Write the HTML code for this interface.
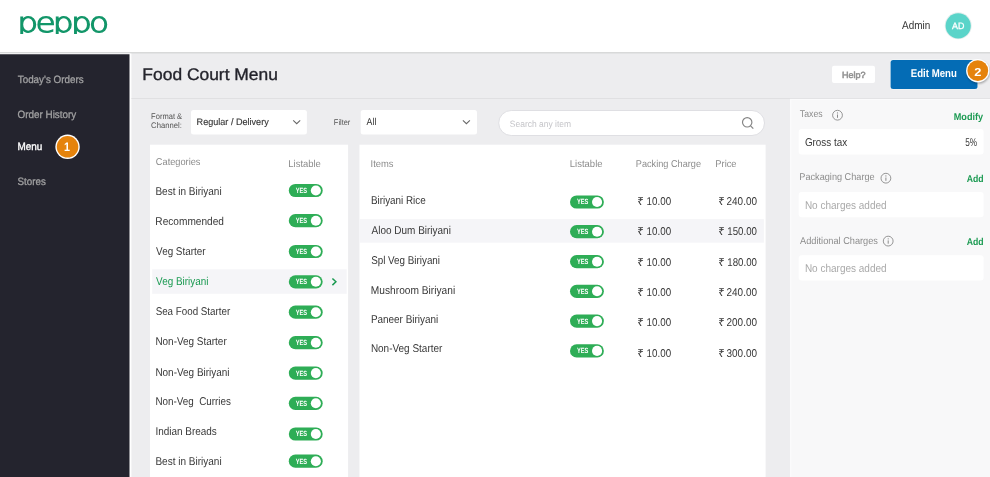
<!DOCTYPE html>
<html>
<head>
<meta charset="utf-8">
<title>Food Court Menu</title>
<style>
*{box-sizing:border-box;margin:0;padding:0}
html,body{width:990px;height:477px;overflow:hidden;background:#ededef;font-family:"Liberation Sans",sans-serif}
#bg{position:absolute;left:0;top:0;width:990px;height:477px}
#tx{position:absolute;left:0;top:0;width:990px;height:477px;will-change:transform}
.t{position:absolute;white-space:nowrap;transform-origin:0 0;text-rendering:geometricPrecision}
#logo{position:absolute;left:0;top:0;width:130px;height:34px;overflow:hidden}
.lg{position:absolute;left:0;top:4px;font-family:"DejaVu Sans","Liberation Sans",sans-serif;font-weight:200;font-size:27.37px;line-height:40px;color:#129669;-webkit-text-stroke:1.2px #129669;letter-spacing:-2.33px;white-space:nowrap;text-rendering:geometricPrecision;transform-origin:0 0;transform:translateX(17.36px) scaleX(1.202)}
</style>
</head>
<body>
<svg id="bg" width="990" height="477" viewBox="0 0 990 477">
<defs>
<filter id="bs" x="-30%" y="-30%" width="160%" height="160%"><feGaussianBlur stdDeviation="1.3"/></filter>
<g id="tg"><rect x="0" y="-6.6" width="33.9" height="13.2" rx="6.6" fill="#2ead56"/><circle cx="27.05" cy="0" r="5.05" fill="#fff"/></g>
<g id="info" fill="none" stroke="#8a8a8a"><circle cx="0" cy="0" r="4.9" stroke-width="0.9"/><path d="M0 -0.7V2.6" stroke-width="1"/><circle cx="0" cy="-2.3" r="0.6" fill="#8a8a8a" stroke="none"/></g>
<path id="chev" d="M-3.5 -1.7L0 1.6L3.5 -1.7" fill="none" stroke="#666" stroke-width="1.05"/>
</defs>
<!-- header -->
<rect x="0" y="0" width="990" height="52" fill="#fff"/>
<rect x="0" y="52" width="990" height="1.5" fill="#d8d9d9"/>
<!-- sidebar -->
<rect x="0" y="53.5" width="131.4" height="424" fill="#fff"/>
<rect x="0" y="54.25" width="129.5" height="423" fill="#24242e"/>
<circle cx="67.55" cy="146.8" r="12.2" fill="#fff"/><circle cx="67.55" cy="146.8" r="10.8" fill="#e5830c"/>
<!-- avatar -->
<circle cx="958.2" cy="25.8" r="13.5" fill="#e3eeed"/><circle cx="958.2" cy="25.8" r="12.6" fill="#5ad4c9"/>
<!-- title bar -->
<rect x="131.4" y="98" width="858.6" height="1" fill="#e0e0e2"/>
<rect x="832" y="65.8" width="43" height="17.2" rx="2" fill="#fff"/>
<rect x="890.1" y="59.4" width="87.9" height="30" rx="3" fill="#f6fafa"/>
<rect x="890.6" y="59.9" width="86.9" height="29" rx="2.5" fill="#046cb5"/>
<circle cx="978.3" cy="72.2" r="11.4" fill="#000" opacity="0.33" filter="url(#bs)"/><circle cx="977.8" cy="70.7" r="11.7" fill="#fff"/><circle cx="977.8" cy="70.7" r="10.4" fill="#e5830c"/>
<!-- right panel -->
<rect x="790" y="98.9" width="200" height="379" fill="#fbfbfc"/>
<rect x="791.2" y="100" width="199" height="378" fill="#f8f8f9"/>
<rect x="798.7" y="128.9" width="184.9" height="25.5" rx="3" fill="#fff"/>
<rect x="798.7" y="192.1" width="184.9" height="25.2" rx="3" fill="#fff"/>
<rect x="798.7" y="255.3" width="184.9" height="25.2" rx="3" fill="#fff"/>
<use href="#info" x="837.5" y="115.2"/>
<use href="#info" x="885.9" y="178.2"/>
<use href="#info" x="888.2" y="241.1"/>
<!-- filter row -->
<rect x="191" y="110.1" width="115.9" height="24.3" rx="2.5" fill="#fff"/>
<rect x="360.7" y="110.1" width="116.3" height="24.3" rx="2.5" fill="#fff"/>
<use href="#chev" x="296.7" y="122.1"/>
<use href="#chev" x="466.4" y="122.1"/>
<rect x="498.7" y="110.5" width="265.8" height="25" rx="12.5" fill="#fff" stroke="#dfdfe3" stroke-width="1"/>
<circle cx="747.2" cy="122.3" r="4.7" fill="none" stroke="#848484" stroke-width="1.15"/><path d="M750.6 125.8L753.3 128.6" stroke="#848484" stroke-width="1.2"/>
<!-- panels -->
<rect x="150" y="144.7" width="198.1" height="333" fill="#fff"/>
<rect x="152.2" y="269.3" width="194.5" height="24.5" fill="#f5f5f8"/>
<path d="M332.4 278.5L335.9 281.8L332.4 285.1" fill="none" stroke="#1b9a52" stroke-width="1.5"/>
<rect x="359.45" y="144.7" width="406.15" height="333" fill="#fff"/>
<rect x="359.3" y="219.1" width="404.6" height="23.6" fill="#f5f5f8"/>
<use href="#tg" x="288.8" y="190.5"/>
<use href="#tg" x="288.8" y="220.7"/>
<use href="#tg" x="288.8" y="251.5"/>
<use href="#tg" x="288.8" y="281.8"/>
<use href="#tg" x="288.8" y="312.2"/>
<use href="#tg" x="288.8" y="342.7"/>
<use href="#tg" x="288.8" y="373.1"/>
<use href="#tg" x="288.8" y="403.3"/>
<use href="#tg" x="288.8" y="434.0"/>
<use href="#tg" x="288.8" y="461.2"/>
<use href="#tg" x="570.0" y="202.0"/>
<use href="#tg" x="570.0" y="231.7"/>
<use href="#tg" x="570.0" y="261.7"/>
<use href="#tg" x="570.0" y="291.3"/>
<use href="#tg" x="570.0" y="321.1"/>
<use href="#tg" x="570.0" y="350.9"/>
</svg>
<div id="tx">
<div id="logo"><div class="lg">peppo</div></div>
<div class="t" style="left:902px;top:18px;font-size:11.3px;line-height:16px;color:#333;transform:translateX(0.10px) scaleX(0.8801)">Admin</div>
<div class="t" style="left:951px;top:19px;font-size:9.2px;line-height:14px;color:#fff;transform:translateX(1.00px) scaleX(0.9662);-webkit-text-stroke:0.3px #fff">AD</div>
<div class="t" style="left:17px;top:72px;font-size:10.61px;line-height:16px;color:#a1a1a2;transform:translateX(0.75px) scaleX(0.9277);-webkit-text-stroke:0.3px #a1a1a2">Today's Orders</div>
<div class="t" style="left:17px;top:107px;font-size:10.61px;line-height:16px;color:#a1a1a2;transform:translateX(0.50px) scaleX(0.9318);-webkit-text-stroke:0.3px #a1a1a2">Order History</div>
<div class="t" style="left:17px;top:139px;font-size:10.61px;line-height:16px;color:#fff;transform:translateX(0.50px) scaleX(0.9349);-webkit-text-stroke:0.35px #fff">Menu</div>
<div class="t" style="left:17px;top:174px;font-size:10.61px;line-height:16px;color:#a1a1a2;transform:translateX(0.50px) scaleX(0.9220);-webkit-text-stroke:0.3px #a1a1a2">Stores</div>
<div class="t" style="left:64px;top:139px;font-size:12.26px;line-height:17px;color:#fff;transform:translateX(0.02px) scaleX(0.8784);font-weight:700">1</div>
<div class="t" style="left:142px;top:63px;font-size:16.74px;line-height:23px;color:#24242c;transform:translateX(0.36px) scaleX(1.0409);-webkit-text-stroke:0.35px #24242c">Food Court Menu</div>
<div class="t" style="left:841px;top:68px;font-size:8.9px;line-height:14px;color:#939393;transform:translateX(0.95px) scaleX(1.0169);-webkit-text-stroke:0.55px #939393">Help?</div>
<div class="t" style="left:910px;top:66px;font-size:11.3px;line-height:16px;color:#fff;transform:translateX(0.80px) scaleX(0.8527);font-weight:700">Edit Menu</div>
<div class="t" style="left:974px;top:65px;font-size:11.6px;line-height:16px;color:#fff;transform:translateX(0.18px) scaleX(1.1048);font-weight:700">2</div>
<div class="t" style="left:151px;top:111px;font-size:8.21px;line-height:12px;color:#555;transform:translateX(0.10px) scaleX(0.9207)">Format &amp;</div>
<div class="t" style="left:151px;top:120px;font-size:8.21px;line-height:12px;color:#555;transform:translateX(0.10px) scaleX(0.9348)">Channel:</div>
<div class="t" style="left:196px;top:116px;font-size:9.53px;line-height:14px;color:#383838;transform:translateX(0.58px) scaleX(0.9540);-webkit-text-stroke:0.15px #383838">Regular / Delivery</div>
<div class="t" style="left:333px;top:117px;font-size:8.21px;line-height:12px;color:#555;transform:translateX(0.87px) scaleX(0.9007)">Filter</div>
<div class="t" style="left:366px;top:116px;font-size:9.89px;line-height:14px;color:#333;transform:translateX(0.60px) scaleX(0.8904)">All</div>
<div class="t" style="left:509px;top:118px;font-size:9.17px;line-height:13px;color:#c4c4c8;transform:translateX(0.85px) scaleX(0.9244)">Search any item</div>
<div class="t" style="left:155px;top:156px;font-size:9.89px;line-height:14px;color:#8c8c8c;transform:translateX(0.84px) scaleX(0.9347)">Categories</div>
<div class="t" style="left:288px;top:158px;font-size:9.89px;line-height:14px;color:#8c8c8c;transform:translateX(0.32px) scaleX(0.9562)">Listable</div>
<div class="t" style="left:155px;top:184px;font-size:11.3px;line-height:16px;color:#383838;transform:translateX(0.38px) scaleX(0.8867)">Best in Biriyani</div>
<div class="t" style="left:155px;top:214px;font-size:11.3px;line-height:16px;color:#383838;transform:translateX(0.37px) scaleX(0.8948)">Recommended</div>
<div class="t" style="left:156px;top:244px;font-size:11.3px;line-height:16px;color:#383838;transform:translateX(0.10px) scaleX(0.8738)">Veg Starter</div>
<div class="t" style="left:156px;top:274px;font-size:11.3px;line-height:16px;color:#1b9a52;transform:translateX(0.10px) scaleX(0.8777)">Veg Biriyani</div>
<div class="t" style="left:155px;top:304px;font-size:11.3px;line-height:16px;color:#383838;transform:translateX(0.63px) scaleX(0.8670)">Sea Food Starter</div>
<div class="t" style="left:155px;top:334px;font-size:11.3px;line-height:16px;color:#383838;transform:translateX(0.38px) scaleX(0.8807)">Non-Veg Starter</div>
<div class="t" style="left:155px;top:365px;font-size:11.3px;line-height:16px;color:#383838;transform:translateX(0.38px) scaleX(0.8814)">Non-Veg Biriyani</div>
<div class="t" style="left:155px;top:394px;font-size:11.3px;line-height:16px;color:#383838;transform:translateX(0.39px) scaleX(0.8710)">Non-Veg&nbsp; Curries</div>
<div class="t" style="left:155px;top:424px;font-size:11.3px;line-height:16px;color:#383838;transform:translateX(0.39px) scaleX(0.8804)">Indian Breads</div>
<div class="t" style="left:155px;top:454px;font-size:11.3px;line-height:16px;color:#383838;transform:translateX(0.38px) scaleX(0.8867)">Best in Biriyani</div>
<div class="t" style="left:370px;top:158px;font-size:9.89px;line-height:14px;color:#8c8c8c;transform:translateX(0.57px) scaleX(0.9503)">Items</div>
<div class="t" style="left:569px;top:158px;font-size:9.89px;line-height:14px;color:#8c8c8c;transform:translateX(0.82px) scaleX(0.9607)">Listable</div>
<div class="t" style="left:635px;top:158px;font-size:9.89px;line-height:14px;color:#8c8c8c;transform:translateX(0.84px) scaleX(0.9271)">Packing Charge</div>
<div class="t" style="left:715px;top:158px;font-size:9.89px;line-height:14px;color:#8c8c8c;transform:translateX(0.33px) scaleX(0.9432)">Price</div>
<div class="t" style="left:370px;top:193px;font-size:11.3px;line-height:16px;color:#383838;transform:translateX(0.89px) scaleX(0.8737)">Biriyani Rice</div>
<div class="t" style="left:637px;top:195px;font-size:10.9px;line-height:15px;color:#383838;transform:translateX(0.13px) scaleX(1.0722);font-family:"DejaVu Sans",sans-serif">₹</div>
<div class="t" style="left:646px;top:194px;font-size:11.3px;line-height:16px;color:#383838;transform:translateX(0.54px) scaleX(0.8686)">10.00</div>
<div class="t" style="left:718px;top:195px;font-size:10.9px;line-height:15px;color:#383838;transform:translateX(0.14px) scaleX(1.0509);font-family:"DejaVu Sans",sans-serif">₹</div>
<div class="t" style="left:726px;top:194px;font-size:11.3px;line-height:16px;color:#383838;transform:translateX(0.52px) scaleX(0.8814)">240.00</div>
<div class="t" style="left:371px;top:223px;font-size:11.3px;line-height:16px;color:#383838;transform:translateX(0.60px) scaleX(0.8830)">Aloo Dum Biriyani</div>
<div class="t" style="left:637px;top:225px;font-size:10.9px;line-height:15px;color:#383838;transform:translateX(0.13px) scaleX(1.0722);font-family:"DejaVu Sans",sans-serif">₹</div>
<div class="t" style="left:646px;top:224px;font-size:11.3px;line-height:16px;color:#383838;transform:translateX(0.54px) scaleX(0.8686)">10.00</div>
<div class="t" style="left:718px;top:225px;font-size:10.9px;line-height:15px;color:#383838;transform:translateX(0.14px) scaleX(1.0509);font-family:"DejaVu Sans",sans-serif">₹</div>
<div class="t" style="left:727px;top:224px;font-size:11.3px;line-height:16px;color:#383838;transform:translateX(0.31px) scaleX(0.8587)">150.00</div>
<div class="t" style="left:371px;top:253px;font-size:11.3px;line-height:16px;color:#383838;transform:translateX(0.13px) scaleX(0.8707)">Spl Veg Biriyani</div>
<div class="t" style="left:637px;top:256px;font-size:10.9px;line-height:15px;color:#383838;transform:translateX(0.13px) scaleX(1.0722);font-family:"DejaVu Sans",sans-serif">₹</div>
<div class="t" style="left:646px;top:255px;font-size:11.3px;line-height:16px;color:#383838;transform:translateX(0.54px) scaleX(0.8686)">10.00</div>
<div class="t" style="left:718px;top:256px;font-size:10.9px;line-height:15px;color:#383838;transform:translateX(0.14px) scaleX(1.0509);font-family:"DejaVu Sans",sans-serif">₹</div>
<div class="t" style="left:727px;top:255px;font-size:11.3px;line-height:16px;color:#383838;transform:translateX(0.31px) scaleX(0.8587)">180.00</div>
<div class="t" style="left:370px;top:283px;font-size:11.3px;line-height:16px;color:#383838;transform:translateX(0.87px) scaleX(0.9015)">Mushroom Biriyani</div>
<div class="t" style="left:637px;top:286px;font-size:10.9px;line-height:15px;color:#383838;transform:translateX(0.13px) scaleX(1.0722);font-family:"DejaVu Sans",sans-serif">₹</div>
<div class="t" style="left:646px;top:285px;font-size:11.3px;line-height:16px;color:#383838;transform:translateX(0.54px) scaleX(0.8686)">10.00</div>
<div class="t" style="left:718px;top:286px;font-size:10.9px;line-height:15px;color:#383838;transform:translateX(0.14px) scaleX(1.0509);font-family:"DejaVu Sans",sans-serif">₹</div>
<div class="t" style="left:726px;top:285px;font-size:11.3px;line-height:16px;color:#383838;transform:translateX(0.52px) scaleX(0.8814)">240.00</div>
<div class="t" style="left:370px;top:312px;font-size:11.3px;line-height:16px;color:#383838;transform:translateX(0.88px) scaleX(0.8796)">Paneer Biriyani</div>
<div class="t" style="left:637px;top:316px;font-size:10.9px;line-height:15px;color:#383838;transform:translateX(0.13px) scaleX(1.0722);font-family:"DejaVu Sans",sans-serif">₹</div>
<div class="t" style="left:646px;top:315px;font-size:11.3px;line-height:16px;color:#383838;transform:translateX(0.54px) scaleX(0.8686)">10.00</div>
<div class="t" style="left:718px;top:316px;font-size:10.9px;line-height:15px;color:#383838;transform:translateX(0.14px) scaleX(1.0509);font-family:"DejaVu Sans",sans-serif">₹</div>
<div class="t" style="left:726px;top:315px;font-size:11.3px;line-height:16px;color:#383838;transform:translateX(0.52px) scaleX(0.8814)">200.00</div>
<div class="t" style="left:370px;top:341px;font-size:11.3px;line-height:16px;color:#383838;transform:translateX(0.88px) scaleX(0.8820)">Non-Veg Starter</div>
<div class="t" style="left:637px;top:347px;font-size:10.9px;line-height:15px;color:#383838;transform:translateX(0.13px) scaleX(1.0722);font-family:"DejaVu Sans",sans-serif">₹</div>
<div class="t" style="left:646px;top:346px;font-size:11.3px;line-height:16px;color:#383838;transform:translateX(0.54px) scaleX(0.8686)">10.00</div>
<div class="t" style="left:718px;top:347px;font-size:10.9px;line-height:15px;color:#383838;transform:translateX(0.14px) scaleX(1.0509);font-family:"DejaVu Sans",sans-serif">₹</div>
<div class="t" style="left:726px;top:346px;font-size:11.3px;line-height:16px;color:#383838;transform:translateX(0.51px) scaleX(0.8818)">300.00</div>
<div class="t" style="left:295px;top:185px;font-size:7.55px;line-height:11px;color:#fff;transform:translateX(0.77px) scaleX(0.7531);font-weight:700">YES</div>
<div class="t" style="left:295px;top:215px;font-size:7.55px;line-height:11px;color:#fff;transform:translateX(0.77px) scaleX(0.7531);font-weight:700">YES</div>
<div class="t" style="left:295px;top:246px;font-size:7.55px;line-height:11px;color:#fff;transform:translateX(0.77px) scaleX(0.7531);font-weight:700">YES</div>
<div class="t" style="left:295px;top:276px;font-size:7.55px;line-height:11px;color:#fff;transform:translateX(0.77px) scaleX(0.7531);font-weight:700">YES</div>
<div class="t" style="left:295px;top:307px;font-size:7.55px;line-height:11px;color:#fff;transform:translateX(0.77px) scaleX(0.7531);font-weight:700">YES</div>
<div class="t" style="left:295px;top:337px;font-size:7.55px;line-height:11px;color:#fff;transform:translateX(0.77px) scaleX(0.7531);font-weight:700">YES</div>
<div class="t" style="left:295px;top:368px;font-size:7.55px;line-height:11px;color:#fff;transform:translateX(0.77px) scaleX(0.7531);font-weight:700">YES</div>
<div class="t" style="left:295px;top:398px;font-size:7.55px;line-height:11px;color:#fff;transform:translateX(0.77px) scaleX(0.7531);font-weight:700">YES</div>
<div class="t" style="left:295px;top:428px;font-size:7.55px;line-height:11px;color:#fff;transform:translateX(0.77px) scaleX(0.7531);font-weight:700">YES</div>
<div class="t" style="left:295px;top:456px;font-size:7.55px;line-height:11px;color:#fff;transform:translateX(0.77px) scaleX(0.7531);font-weight:700">YES</div>
<div class="t" style="left:577px;top:196px;font-size:7.55px;line-height:11px;color:#fff;transform:translateX(0.02px) scaleX(0.7539);font-weight:700">YES</div>
<div class="t" style="left:577px;top:226px;font-size:7.55px;line-height:11px;color:#fff;transform:translateX(0.02px) scaleX(0.7539);font-weight:700">YES</div>
<div class="t" style="left:577px;top:256px;font-size:7.55px;line-height:11px;color:#fff;transform:translateX(0.02px) scaleX(0.7539);font-weight:700">YES</div>
<div class="t" style="left:577px;top:286px;font-size:7.55px;line-height:11px;color:#fff;transform:translateX(0.02px) scaleX(0.7539);font-weight:700">YES</div>
<div class="t" style="left:577px;top:316px;font-size:7.55px;line-height:11px;color:#fff;transform:translateX(0.02px) scaleX(0.7539);font-weight:700">YES</div>
<div class="t" style="left:577px;top:345px;font-size:7.55px;line-height:11px;color:#fff;transform:translateX(0.02px) scaleX(0.7539);font-weight:700">YES</div>
<div class="t" style="left:799px;top:108px;font-size:9.89px;line-height:14px;color:#8c8c8c;transform:translateX(0.86px) scaleX(0.8820)">Taxes</div>
<div class="t" style="left:953px;top:111px;font-size:9.89px;line-height:14px;color:#1b9a52;transform:translateX(0.75px) scaleX(0.9216);font-weight:700">Modify</div>
<div class="t" style="left:804px;top:135px;font-size:11.3px;line-height:16px;color:#383838;transform:translateX(0.88px) scaleX(0.8749)">Gross tax</div>
<div class="t" style="left:965px;top:135px;font-size:11.3px;line-height:16px;color:#383838;transform:translateX(0.18px) scaleX(0.7258)">5%</div>
<div class="t" style="left:799px;top:171px;font-size:9.89px;line-height:14px;color:#8c8c8c;transform:translateX(0.35px) scaleX(0.9261)">Packaging Charge</div>
<div class="t" style="left:966px;top:173px;font-size:9.89px;line-height:14px;color:#1b9a52;transform:translateX(0.76px) scaleX(0.8790);font-weight:700">Add</div>
<div class="t" style="left:804px;top:198px;font-size:11.3px;line-height:16px;color:#a9a9a9;transform:translateX(0.88px) scaleX(0.8853)">No charges added</div>
<div class="t" style="left:800px;top:235px;font-size:9.89px;line-height:14px;color:#8c8c8c;transform:translateX(0.10px) scaleX(0.9331)">Additional Charges</div>
<div class="t" style="left:966px;top:236px;font-size:9.89px;line-height:14px;color:#1b9a52;transform:translateX(0.76px) scaleX(0.8790);font-weight:700">Add</div>
<div class="t" style="left:804px;top:261px;font-size:11.3px;line-height:16px;color:#a9a9a9;transform:translateX(0.88px) scaleX(0.8853)">No charges added</div>
</div>
</body>
</html>
